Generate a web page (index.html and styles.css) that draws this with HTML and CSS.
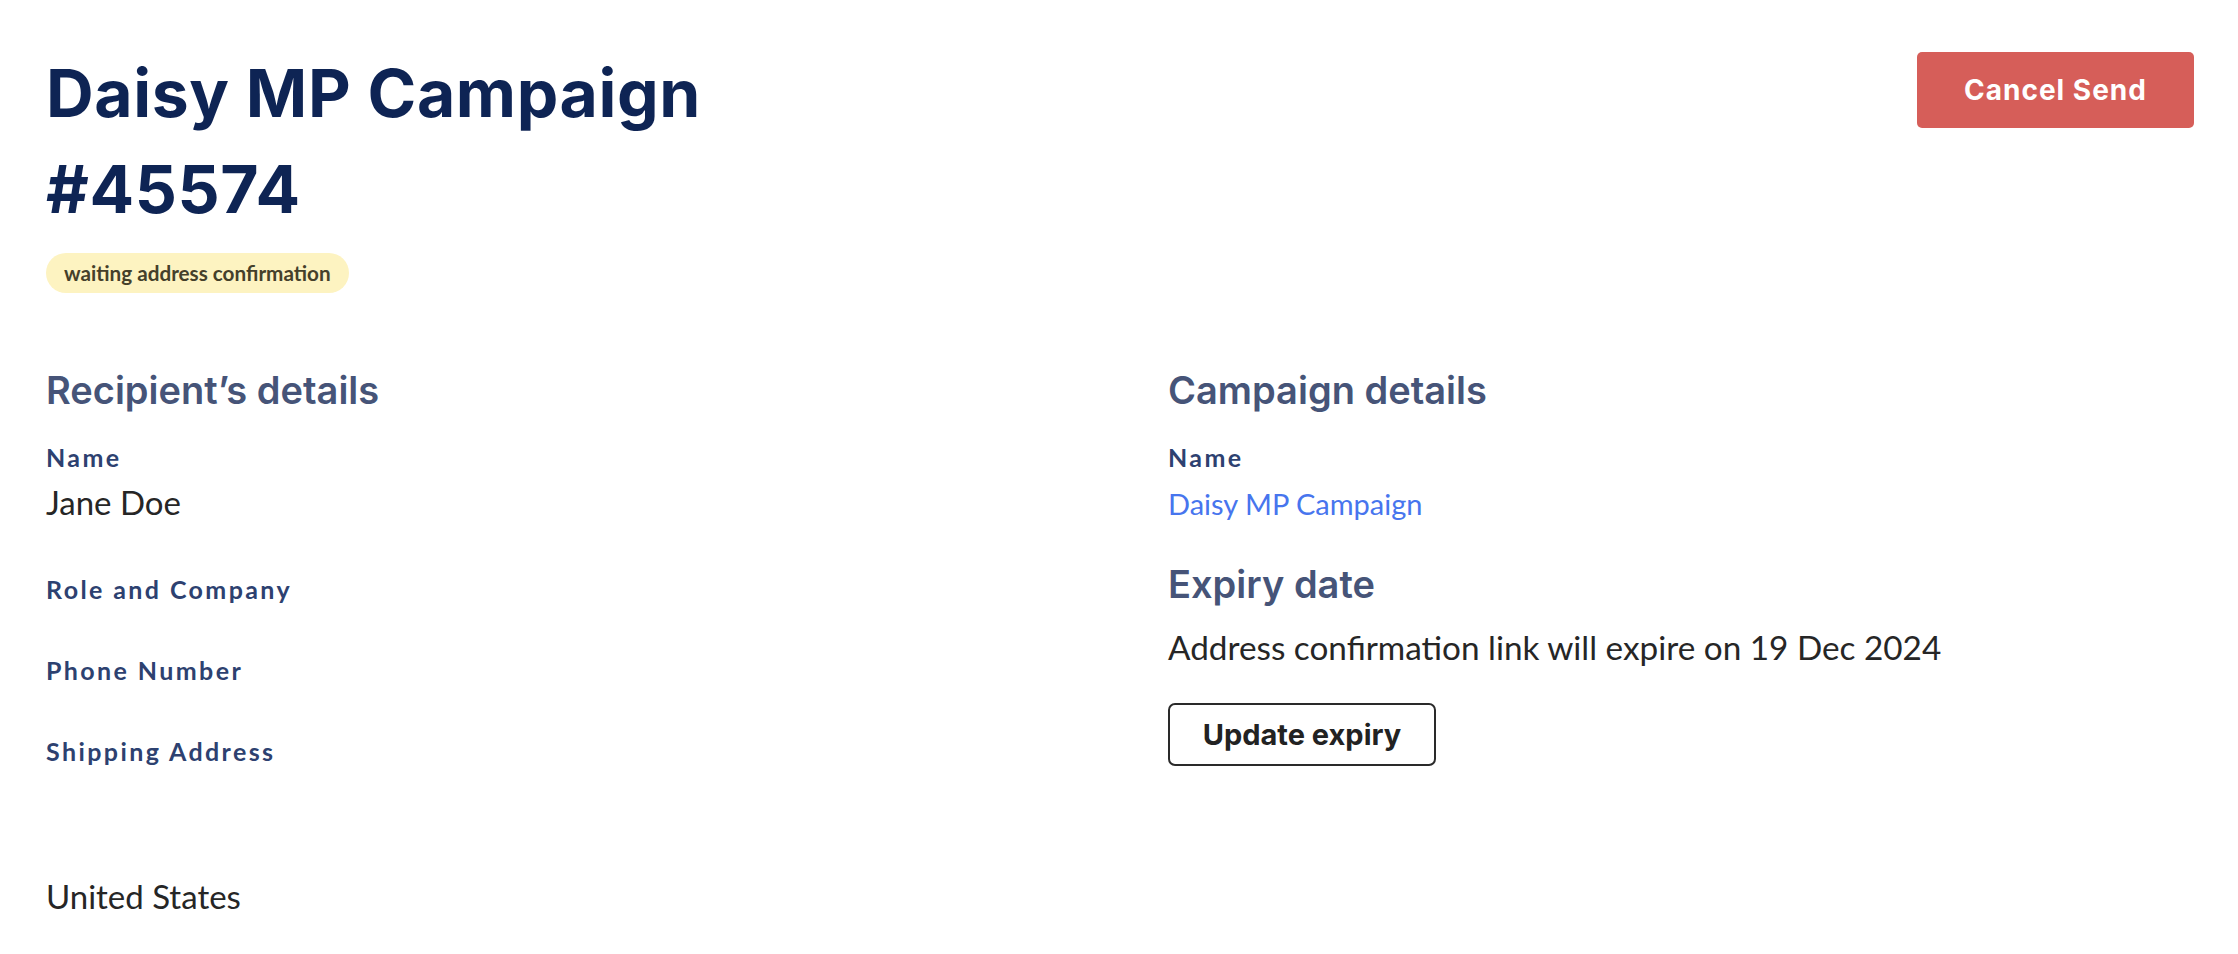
FILE: index.html
```html
<!DOCTYPE html>
<html lang="en">
<head>
  <meta charset="UTF-8" />
  <meta name="viewport" content="width=device-width, initial-scale=1.0"/>
  <title>Daisy MP Campaign #45574</title>
  <link rel="stylesheet" href="styles.css">
</head>
<body>
  <div id="sendPage">
    <div class="page-header">
      <div class="title-block">
        <h1 class="send-title">Daisy MP Campaign #45574</h1>
        <span class="status-badge">waiting address confirmation</span>
      </div>
      <button class="cancel-btn">Cancel Send</button>
    </div>

    <div class="details-grid">
      <div class="details-col">
        <h2 class="section-title">Recipient’s details</h2>
        <div class="field">
          <div class="field-label">Name</div>
          <div class="field-value">Jane Doe</div>
        </div>
        <div class="field">
          <div class="field-label">Role and Company</div>
        </div>
        <div class="field">
          <div class="field-label">Phone Number</div>
        </div>
        <div class="field">
          <div class="field-label">Shipping Address</div>
          <div class="address">
            <div class="address-line"></div>
            <div class="address-line"></div>
            <div class="address-line">United States</div>
          </div>
        </div>
      </div>

      <div class="details-col">
        <h2 class="section-title">Campaign details</h2>
        <div class="field">
          <div class="field-label">Name</div>
          <div class="field-value"><a href="#" class="campaign-link">Daisy MP Campaign</a></div>
        </div>
        <h2 class="section-title expiry-title">Expiry date</h2>
        <p class="expiry-text">Address confirmation link will expire on 19 Dec 2024</p>
        <button class="outline-btn">Update expiry</button>
      </div>
    </div>
  </div>
</body>
</html>
```

FILE: styles.css
```css
body {
  margin: 0;
  font-family: Lato, "Noto Sans", sans-serif;
  color: #262626;
  background-color: #fff;
}
#sendPage {
  padding: 45px 44px 10px 46px;
}

/* header */
.page-header {
  display: flex;
  justify-content: space-between;
  align-items: flex-start;
}
.title-block {
  max-width: 800px;
}
.send-title {
  margin: 0;
  font-family: Inter, "Noto Sans", sans-serif;
  font-weight: 700;
  font-size: 66px;
  line-height: 96px;
  letter-spacing: 0.6px;
  color: #0e2454;
}
.status-badge {
  display: inline-block;
  margin-top: 16px;
  padding: 0 18px;
  height: 40px;
  line-height: 40px;
  border-radius: 20px;
  background-color: #fdf3c1;
  color: #45402a;
  font-size: 20.7px;
  font-weight: 700;
}
.cancel-btn {
  margin-top: 7px;
  width: 277px;
  height: 76px;
  border: none;
  border-radius: 5px;
  background-color: #d65e59;
  color: #fff;
  font-family: Inter, "Noto Sans", sans-serif;
  font-size: 28px;
  font-weight: 700;
  letter-spacing: 1px;
  cursor: pointer;
}

/* two columns */
.details-grid {
  display: grid;
  grid-template-columns: 1fr 1fr;
  column-gap: 96px;
  margin-top: 70px;
}
.section-title {
  margin: 0 0 22px;
  font-family: Inter, "Noto Sans", sans-serif;
  font-size: 38px;
  font-weight: 600;
  line-height: 54px;
  color: #465478;
}
.field {
  margin-bottom: 45px;
}
.field-label {
  font-size: 25px;
  line-height: 36px;
  font-weight: 700;
  letter-spacing: 2.4px;
  color: #2d4170;
}
.field-value {
  margin-top: 3px;
  font-size: 33px;
  line-height: 48px;
}
.address {
  margin-top: 7px;
}
.address-line {
  min-height: 48px;
  font-size: 33px;
  line-height: 48px;
}
.campaign-link {
  display: inline-block;
  font-size: 29px;
  color: #4775ee;
  text-decoration: none;
}
.expiry-title {
  margin-top: -16px;
  margin-bottom: 12px;
}
.expiry-text {
  margin: 0 0 32px;
  font-size: 33.3px;
  line-height: 48px;
}
.outline-btn {
  width: 268px;
  height: 63px;
  border: 2px solid #2a2a2a;
  border-radius: 7px;
  background-color: #fff;
  color: #222;
  font-family: Inter, "Noto Sans", sans-serif;
  font-size: 29px;
  font-weight: 700;
  cursor: pointer;
}
```
